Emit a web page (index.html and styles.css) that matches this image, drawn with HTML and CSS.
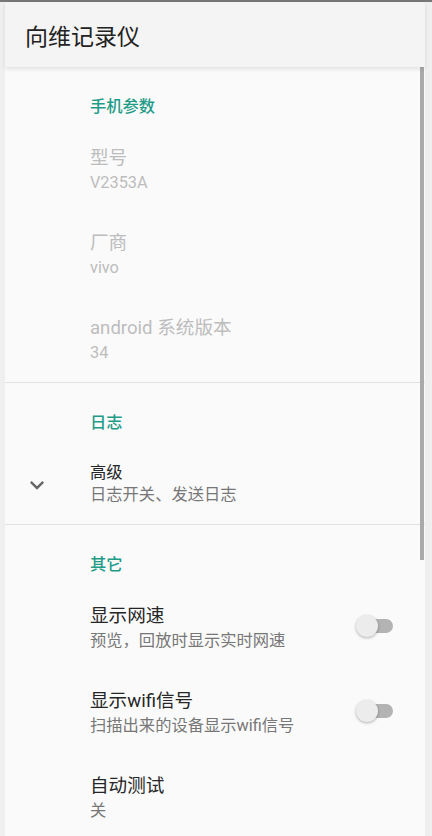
FILE: index.html
```html
<!DOCTYPE html>
<html lang="zh-CN">
<head>
  <meta charset="UTF-8" />
  <title>向维记录仪</title>
  <link rel="stylesheet" href="styles.css">
</head>
<body>
  <div class="tela">
    <div class="app">
      <!-- Barra superior -->
      <header class="toolbar">向维记录仪</header>

      <div class="lista">
        <div class="barra-rolagem"></div>

        <!-- Parâmetros do telefone -->
        <section class="secao">
          <div class="categoria">手机参数</div>
          <div class="item desativado">
            <div class="titulo">型号</div>
            <div class="resumo">V2353A</div>
          </div>
          <div class="item desativado">
            <div class="titulo">厂商</div>
            <div class="resumo">vivo</div>
          </div>
          <div class="item desativado">
            <div class="titulo">android 系统版本</div>
            <div class="resumo">34</div>
          </div>
        </section>

        <!-- Log -->
        <section class="secao">
          <div class="categoria">日志</div>
          <div class="item expandir">
            <svg class="seta" viewBox="0 0 24 24" width="28" height="28">
              <path d="M16.59 8.59L12 13.17 7.41 8.59 6 10l6 6 6-6z" fill="#666"/>
            </svg>
            <div class="textos">
              <div class="titulo">高级</div>
              <div class="resumo">日志开关、发送日志</div>
            </div>
          </div>
        </section>

        <!-- Outros -->
        <section class="secao">
          <div class="categoria">其它</div>
          <div class="item com-chave">
            <div class="textos">
              <div class="titulo">显示网速</div>
              <div class="resumo">预览，回放时显示实时网速</div>
            </div>
            <div class="chave"><span class="bolinha"></span></div>
          </div>
          <div class="item com-chave">
            <div class="textos">
              <div class="titulo">显示wifi信号</div>
              <div class="resumo">扫描出来的设备显示wifi信号</div>
            </div>
            <div class="chave"><span class="bolinha"></span></div>
          </div>
          <div class="item">
            <div class="titulo">自动测试</div>
            <div class="resumo">关</div>
          </div>
        </section>
      </div>
    </div>
  </div>
</body>
</html>
```

FILE: styles.css
```css
body {
  margin: 0;
  padding: 0;
  overflow: hidden;
  background-color: #efefef;
  font-family: Roboto, "Noto Sans CJK SC", sans-serif;
}

.tela {
  height: 834px;
  border-top: 2px solid #777;
  display: flex;
}

.app {
  margin-left: 5px;
  width: 420px;
  background: #fafafa;
  display: flex;
  flex-direction: column;
}

.toolbar {
  height: 65px;
  flex-shrink: 0;
  box-sizing: border-box;
  padding-left: 20px;
  display: flex;
  align-items: center;
  font-size: 23px;
  color: #222;
  background: #f4f4f4;
  box-shadow: 0 2px 4px rgba(0, 0, 0, 0.1);
  position: relative;
  z-index: 2;
}

.lista {
  position: relative;
  flex: 1;
  overflow: hidden;
}

/* Barra de rolagem */
.barra-rolagem {
  position: absolute;
  top: 0;
  right: 1px;
  width: 4px;
  height: 493px;
  background: #aaa;
}

.secao + .secao {
  border-top: 1px solid #e2e2e2;
}

.categoria {
  padding: 29px 0 9px 85px;
  line-height: 22px;
  font-size: 16.3px;
  font-weight: 500;
  color: #1f9c88;
}

.secao:first-child .categoria {
  padding-top: 31px;
  padding-bottom: 8px;
}

.item {
  padding: 19px 0 18px 85px;
}

.titulo {
  font-size: 18.6px;
  line-height: 25px;
  color: #262626;
}

.resumo {
  font-size: 16.3px;
  line-height: 23px;
  color: #777;
}

.desativado .titulo,
.desativado .resumo {
  color: #bdbdbd;
}

/* Item expansível */
.expandir {
  display: flex;
  align-items: center;
  padding: 20px 0 18px 18px;
}

.expandir .seta {
  margin-right: 39px;
  margin-top: 1px;
}

.expandir .titulo {
  font-size: 16.3px;
  line-height: 20px;
}

/* Itens com interruptor */
.com-chave {
  display: flex;
  align-items: center;
  padding-right: 32px;
}

.com-chave .textos {
  flex: 1;
}

.chave {
  position: relative;
  width: 35px;
  height: 14px;
  border-radius: 7px;
  background: #b3b3b3;
  margin-top: -5px;
}

.bolinha {
  position: absolute;
  left: -2px;
  top: -4px;
  width: 22px;
  height: 22px;
  border-radius: 50%;
  background: #ececec;
  box-shadow: 0 1px 3px rgba(0, 0, 0, 0.3);
}
```
